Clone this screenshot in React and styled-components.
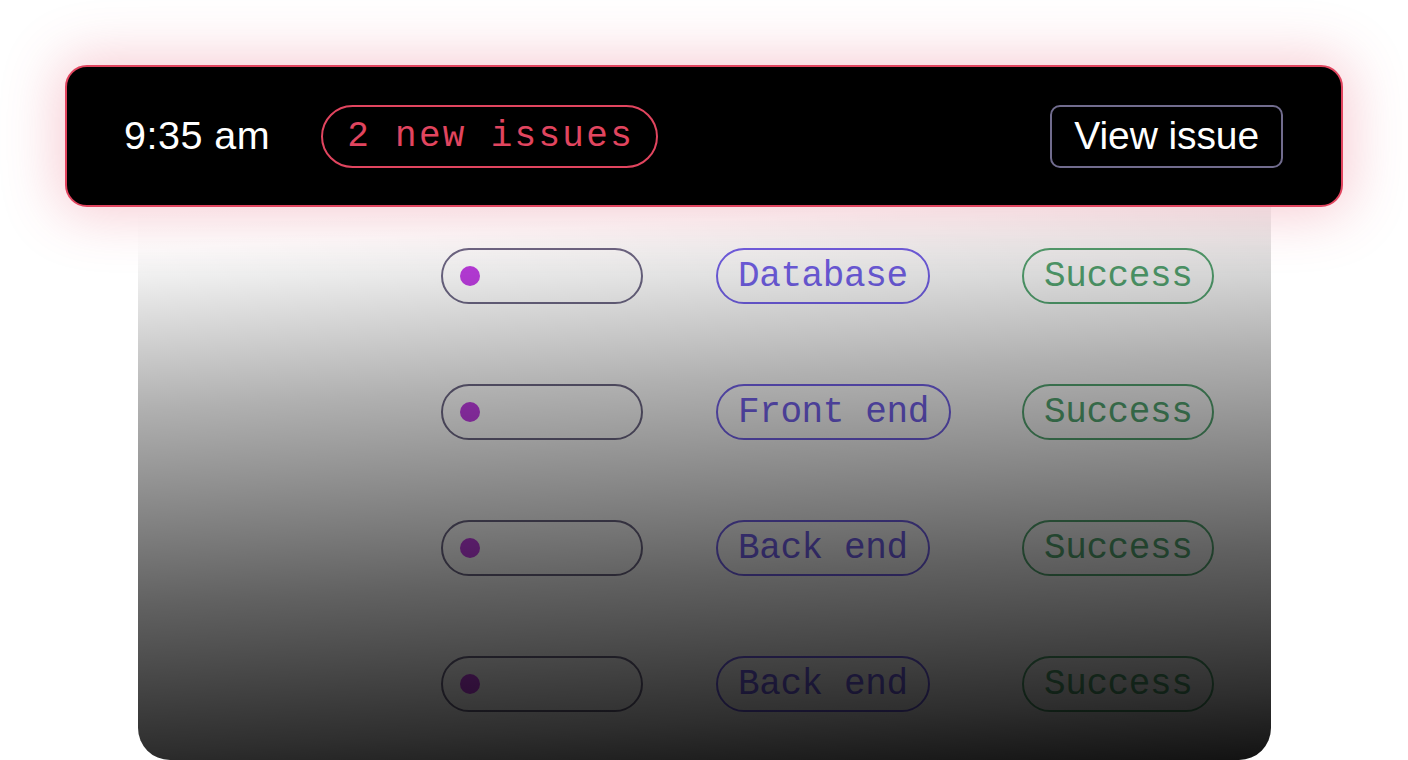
import React from "react";
import styled, { createGlobalStyle } from "styled-components";

const Global = createGlobalStyle`
  html, body { margin: 0; padding: 0; background: #ffffff; }
  body { font-family: "Liberation Sans", Arial, sans-serif; overflow: hidden; }
  * { box-sizing: border-box; }
`;

const Page = styled.div`
  width: 1408px;
  height: 760px;
  padding: 65px 0 0 65px;
  display: flex;
  flex-direction: column;
  align-items: flex-start;
`;

const Bar = styled.div`
  position: relative;
  z-index: 2;
  width: 1278px;
  height: 142px;
  background: #000;
  border: 2px solid #e1455f;
  border-radius: 22px;
  box-shadow: 0 0 55px 8px rgba(226, 60, 90, 0.26);
  display: flex;
  align-items: center;
  padding: 0 58px 0 57px;
  gap: 51px;
`;

const Time = styled.span`
  color: #fff;
  font-size: 39.5px;
  letter-spacing: 0.5px;
  line-height: 1;
`;

const IssueBadge = styled.span`
  height: 63px;
  display: inline-flex;
  align-items: center;
  padding: 0 22px 0 24px;
  border: 2px solid #e1455f;
  border-radius: 999px;
  color: #e1455f;
  font-family: "Liberation Mono", "DejaVu Sans Mono", monospace;
  font-size: 36px;
  letter-spacing: 2.3px;
`;

const ViewButton = styled.button`
  margin-left: auto;
  height: 63px;
  padding: 0 22px;
  background: transparent;
  border: 2px solid #716c8e;
  border-radius: 10px;
  color: #fff;
  font-family: "Liberation Sans", Arial, sans-serif;
  font-size: 39px;
  letter-spacing: -0.1px;
  display: inline-flex;
  align-items: center;
`;

const Panel = styled.div`
  position: relative;
  margin-left: 73px;
  width: 1133px;
  flex: 1;
  background: #ffffff;
  border-radius: 0 0 32px 32px;
  overflow: hidden;
  padding: 41px 0 0 303px;
  display: grid;
  grid-template-columns: 275px 306px auto;
  grid-auto-rows: 56px;
  row-gap: 80px;
  align-content: start;

  &::after {
    content: "";
    position: absolute;
    inset: 0;
    pointer-events: none;
    background: linear-gradient(
      177deg,
      rgba(0, 0, 0, 0) 0%,
      rgba(0, 0, 0, 0.01) 7%,
      rgba(0, 0, 0, 0.31) 33%,
      rgba(0, 0, 0, 0.62) 65%,
      rgba(0, 0, 0, 0.82) 89%,
      rgba(0, 0, 0, 0.93) 100%
    );
  }
`;

const DotPill = styled.div`
  width: 202px;
  height: 56px;
  border: 2px solid #6e6886;
  border-radius: 999px;
  display: flex;
  align-items: center;
  padding-left: 17px;
`;

const Dot = styled.span`
  width: 20px;
  height: 20px;
  border-radius: 50%;
  background: #c03ee3;
`;

const Tag = styled.span`
  justify-self: start;
  height: 56px;
  display: inline-flex;
  align-items: center;
  padding: 0 20px;
  border: 2px solid ${(p) => p.$color};
  border-radius: 999px;
  color: ${(p) => p.$color};
  font-family: "Liberation Mono", "DejaVu Sans Mono", monospace;
  font-size: 36px;
  letter-spacing: -0.4px;
  white-space: pre;
`;

const rows = [
  { cat: "Database", status: "Success" },
  { cat: "Front end", status: "Success" },
  { cat: "Back end", status: "Success" },
  { cat: "Back end", status: "Success" },
];

export default function App() {
  return (
    <>
      <Global />
      <Page>
        <Bar>
          <Time>9:35 am</Time>
          <IssueBadge>2 new issues</IssueBadge>
          <ViewButton>View issue</ViewButton>
        </Bar>
        <Panel>
          {rows.map((r, i) => (
            <React.Fragment key={i}>
              <DotPill>
                <Dot />
              </DotPill>
              <Tag $color="#7462ec">{r.cat}</Tag>
              <Tag $color="#56a974">{r.status}</Tag>
            </React.Fragment>
          ))}
        </Panel>
      </Page>
    </>
  );
}
